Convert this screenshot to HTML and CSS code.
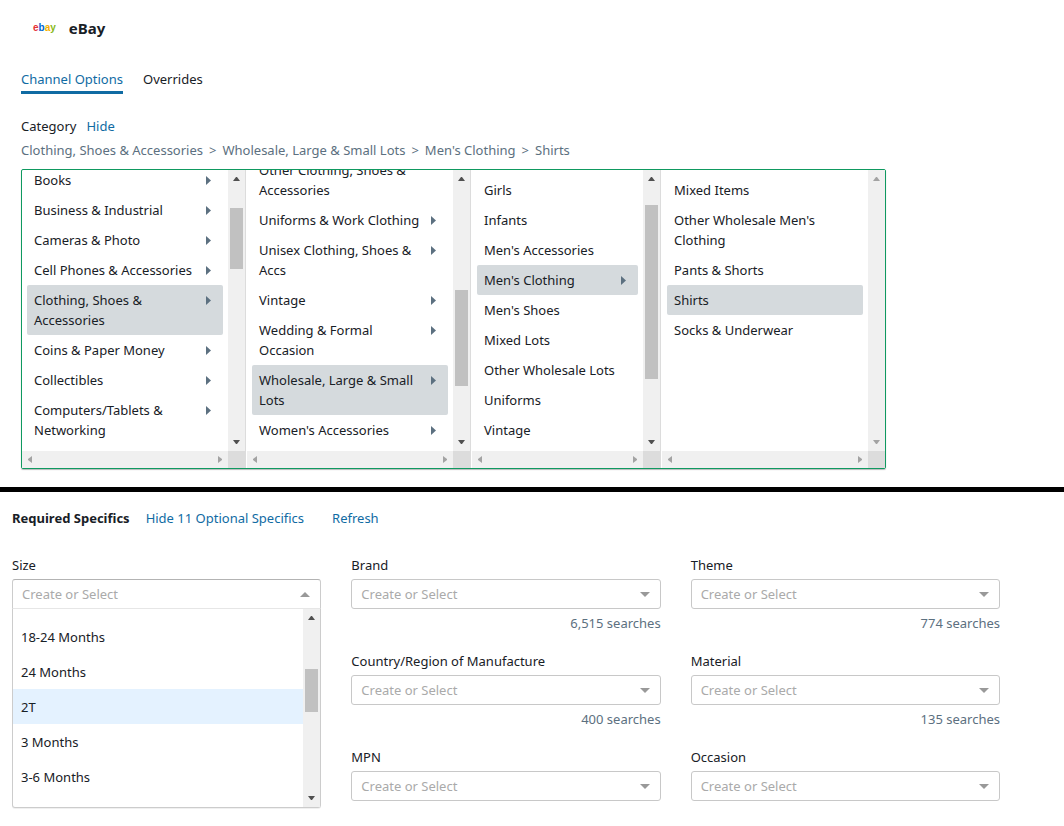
FILE: index.html
```html
<!DOCTYPE html>
<html lang="en">
<head>
<meta charset="utf-8">
<title>eBay channel options</title>
<link rel="stylesheet" href="styles.css">
</head>
<body>
<svg class="defs" aria-hidden="true">
  <symbol id="caret" viewBox="0 0 5 9"><path d="M0 0 5 4.500 0 9z"/></symbol>
  <symbol id="up" viewBox="0 0 17 17"><path d="M5 11h7L9 7H8z"/></symbol>
  <symbol id="down" viewBox="0 0 17 17"><path d="M5 6h7L9 10H8z"/></symbol>
  <symbol id="left" viewBox="0 0 17 17"><path d="M10 5v7L6 9V8z"/></symbol>
  <symbol id="right" viewBox="0 0 17 17"><path d="M7 5v7l4-3V8z"/></symbol>
</svg>
<main>
<section class="channel">
  <header class="brand">
    <span class="logo" aria-hidden="true"><span class="r">e</span><span class="b">b</span><span class="y">a</span><span class="g">y</span></span>
    <h1>eBay</h1>
  </header>
  <nav class="tabs">
    <a class="tab active" href="#options">Channel Options</a>
    <a class="tab" href="#overrides">Overrides</a>
  </nav>
  <div class="category"><span>Category</span><a href="#hide">Hide</a></div>
  <p class="crumbs"><span>Clothing, Shoes &amp; Accessories</span><span>&gt;</span><span>Wholesale, Large &amp; Small Lots</span><span>&gt;</span><span>Men's Clothing</span><span>&gt;</span><span>Shirts</span></p>
  <div class="picker">
    <div class="col">
      <div class="list scrolled">
        <button class="item">Books<svg><use href="#caret"/></svg></button>
        <button class="item">Business &amp; Industrial<svg><use href="#caret"/></svg></button>
        <button class="item">Cameras &amp; Photo<svg><use href="#caret"/></svg></button>
        <button class="item">Cell Phones &amp; Accessories<svg><use href="#caret"/></svg></button>
        <button class="item on">Clothing, Shoes &amp;<br>Accessories<svg><use href="#caret"/></svg></button>
        <button class="item">Coins &amp; Paper Money<svg><use href="#caret"/></svg></button>
        <button class="item">Collectibles<svg><use href="#caret"/></svg></button>
        <button class="item">Computers/Tablets &amp;<br>Networking<svg><use href="#caret"/></svg></button>
      </div>
      <div class="vbar"><svg><use href="#up"/></svg><div class="track"><div class="thumb t1"></div></div><svg><use href="#down"/></svg></div>
      <div class="hbar"><svg><use href="#left"/></svg><svg><use href="#right"/></svg></div><div class="corner"></div>
    </div>
    <div class="col">
      <div class="list scrolled">
        <button class="item">Other Clothing, Shoes &amp;<br>Accessories</button>
        <button class="item">Uniforms &amp; Work Clothing<svg><use href="#caret"/></svg></button>
        <button class="item">Unisex Clothing, Shoes &amp;<br>Accs<svg><use href="#caret"/></svg></button>
        <button class="item">Vintage<svg><use href="#caret"/></svg></button>
        <button class="item">Wedding &amp; Formal<br>Occasion<svg><use href="#caret"/></svg></button>
        <button class="item on">Wholesale, Large &amp; Small<br>Lots<svg><use href="#caret"/></svg></button>
        <button class="item">Women's Accessories<svg><use href="#caret"/></svg></button>
      </div>
      <div class="vbar"><svg><use href="#up"/></svg><div class="track"><div class="thumb t2"></div></div><svg><use href="#down"/></svg></div>
      <div class="hbar"><svg><use href="#left"/></svg><svg><use href="#right"/></svg></div><div class="corner"></div>
    </div>
    <div class="col narrow">
      <div class="list scrolled">
        <button class="item">Girls</button>
        <button class="item">Infants</button>
        <button class="item">Men's Accessories</button>
        <button class="item on">Men's Clothing<svg><use href="#caret"/></svg></button>
        <button class="item">Men's Shoes</button>
        <button class="item">Mixed Lots</button>
        <button class="item">Other Wholesale Lots</button>
        <button class="item">Uniforms</button>
        <button class="item">Vintage</button>
      </div>
      <div class="vbar"><svg><use href="#up"/></svg><div class="track"><div class="thumb t3"></div></div><svg><use href="#down"/></svg></div>
      <div class="hbar"><svg><use href="#left"/></svg><svg><use href="#right"/></svg></div><div class="corner"></div>
    </div>
    <div class="col last">
      <div class="list">
        <button class="item">Mixed Items</button>
        <button class="item">Other Wholesale Men's<br>Clothing</button>
        <button class="item">Pants &amp; Shorts</button>
        <button class="item on">Shirts</button>
        <button class="item">Socks &amp; Underwear</button>
      </div>
      <div class="vbar off"><svg><use href="#up"/></svg><div class="track"></div><svg><use href="#down"/></svg></div>
      <div class="hbar"><svg><use href="#left"/></svg><svg><use href="#right"/></svg></div><div class="corner"></div>
    </div>
  </div>
</section>
<section class="specifics">
  <div class="heading"><h2>Required Specifics</h2><a href="#optional">Hide 11 Optional Specifics</a><a class="refresh" href="#refresh">Refresh</a></div>
  <div class="fields">
    <div class="stack">
      <div class="field">
        <label for="size">Size</label>
        <div class="select open"><select id="size"><option>Create or Select</option></select><svg viewBox="0 0 10 5"><path d="M0 5h10L5 0z"/></svg></div>
        <div class="menu">
          <ul>
            <li>18-24 Months</li>
            <li>24 Months</li>
            <li class="on">2T</li>
            <li>3 Months</li>
            <li>3-6 Months</li>
          </ul>
          <div class="vbar"><svg><use href="#up"/></svg><div class="track"><div class="thumb t4"></div></div><svg><use href="#down"/></svg></div>
        </div>
      </div>
    </div>
    <div class="stack">
      <div class="field">
        <label for="brand">Brand</label>
        <div class="select"><select id="brand"><option>Create or Select</option></select><svg viewBox="0 0 10 5"><path d="M0 0h10L5 5z"/></svg></div>
        <p class="hint">6,515 searches</p>
      </div>
      <div class="field">
        <label for="country">Country/Region of Manufacture</label>
        <div class="select"><select id="country"><option>Create or Select</option></select><svg viewBox="0 0 10 5"><path d="M0 0h10L5 5z"/></svg></div>
        <p class="hint">400 searches</p>
      </div>
      <div class="field">
        <label for="mpn">MPN</label>
        <div class="select"><select id="mpn"><option>Create or Select</option></select><svg viewBox="0 0 10 5"><path d="M0 0h10L5 5z"/></svg></div>
      </div>
    </div>
    <div class="stack">
      <div class="field">
        <label for="theme">Theme</label>
        <div class="select"><select id="theme"><option>Create or Select</option></select><svg viewBox="0 0 10 5"><path d="M0 0h10L5 5z"/></svg></div>
        <p class="hint">774 searches</p>
      </div>
      <div class="field">
        <label for="material">Material</label>
        <div class="select"><select id="material"><option>Create or Select</option></select><svg viewBox="0 0 10 5"><path d="M0 0h10L5 5z"/></svg></div>
        <p class="hint">135 searches</p>
      </div>
      <div class="field">
        <label for="occasion">Occasion</label>
        <div class="select"><select id="occasion"><option>Create or Select</option></select><svg viewBox="0 0 10 5"><path d="M0 0h10L5 5z"/></svg></div>
      </div>
    </div>
  </div>
</section>
</main>
</body>
</html>
```
FILE: styles.css
```css
* { box-sizing: border-box; }
body {
  margin: 0;
  background: #fff;
  color: #182026;
  font: 13px/20px "Noto Sans", "Open Sans", sans-serif;
}
h1, h2, p, ul { margin: 0; padding: 0; }
a { color: #106ba3; text-decoration: none; }
button, select { font: inherit; color: inherit; }
.defs { position: absolute; width: 0; height: 0; }

.channel { padding: 18px 21px 18px; border-bottom: 5px solid #000; }
.brand { display: flex; align-items: center; gap: 13px; padding-left: 12px; }
.brand h1 { font-size: 15px; line-height: 20px; }
.logo { font: bold 10px/16px "Liberation Sans", Arial, sans-serif; }
.r { color: #e53238; }
.b { color: #0064d2; }
.y { color: #f5af02; }
.g { color: #86b817; }
.tabs { display: flex; gap: 20px; margin-top: 31px; }
.tab { color: #182026; padding-bottom: 2px; border-bottom: 3px solid transparent; }
.tab.active { color: #106ba3; border-color: #106ba3; }
.category { display: flex; gap: 10px; margin-top: 22px; }
.crumbs { display: flex; gap: 6px; color: #5c7080; margin-top: 4px; }

.picker {
  display: flex;
  width: fit-content;
  margin-top: 9px;
  border: 1px solid #0f9960;
  border-radius: 2px;
  box-shadow: 0 1px 1px rgba(16, 22, 26, .3);
}
.col {
  display: grid;
  grid-template-columns: 206px 17px;
  grid-template-rows: 281px 17px;
  margin-right: 1px;
  border-right: 1px solid #dcdcdc;
}
.col.narrow { grid-template-columns: 171px 17px; }
.col.last { margin: 0; border: 0; }
.list {
  display: flex;
  flex-direction: column;
  overflow: hidden;
  padding: 5px 5px 6px;
}
.list.scrolled { justify-content: flex-end; }
.item {
  position: relative;
  flex: none;
  padding: 5px 7px;
  border: 0;
  border-radius: 2px;
  background: none;
  text-align: left;
  white-space: nowrap;
}
.item.on { background: #d5dadd; }
.item svg { position: absolute; right: 12px; top: 11px; width: 5px; height: 9px; fill: #5c7080; }
.vbar { display: flex; flex-direction: column; width: 17px; background: #f0f0f0; }
.vbar svg, .hbar svg { flex: none; width: 17px; height: 17px; }
.vbar svg { fill: #505050; }
.vbar.off svg, .hbar svg { fill: #a3a3a3; }
.hbar { display: flex; justify-content: space-between; background: #f0f0f0; }
.corner { background: #dcdcdc; }
.track { flex: 1; padding: 0 2px; }
.thumb { background: #c1c1c1; }
.t1 { height: 61px; margin-top: 21px; }
.t2 { height: 96px; margin-top: 103px; }
.t3 { height: 174px; margin-top: 18px; }
.t4 { height: 43px; margin-top: 43px; }

.specifics { padding: 16px 64px 18px 12px; }
.heading { display: flex; gap: 16px; }
.heading h2 { font-size: 13px; line-height: 20px; }
.heading .refresh { margin-left: 12px; }
.fields { display: grid; grid-template-columns: repeat(3, 1fr); gap: 30px; margin-top: 27px; }
.stack { display: flex; flex-direction: column; gap: 18px; }
.field { display: flex; flex-direction: column; }
.select { position: relative; margin-top: 4px; }
.select select {
  display: block;
  width: 100%;
  height: 30px;
  padding: 0 9px;
  appearance: none;
  border: 1px solid #c8c8c8;
  border-radius: 3px;
  background: #fff;
  color: #aaa;
}
.select.open select { border-color: #b3b3b3 #ccc #e6e6e6; border-radius: 3px 3px 0 0; }
.select svg { position: absolute; right: 11px; top: 13px; width: 10px; height: 5px; fill: #999; pointer-events: none; }
.hint { margin-top: 4px; text-align: right; color: #5c7080; }
.menu {
  display: flex;
  height: 199px;
  border: 1px solid #ccc;
  border-top: 0;
  border-radius: 0 0 3px 3px;
  box-shadow: 0 1px 0 rgba(0, 0, 0, .06);
}
.menu ul { flex: 1; padding-top: 10px; list-style: none; }
.menu li { padding: 8px 8px 7px; line-height: 20px; }
.menu li.on { background: #e4f2ff; }
```
